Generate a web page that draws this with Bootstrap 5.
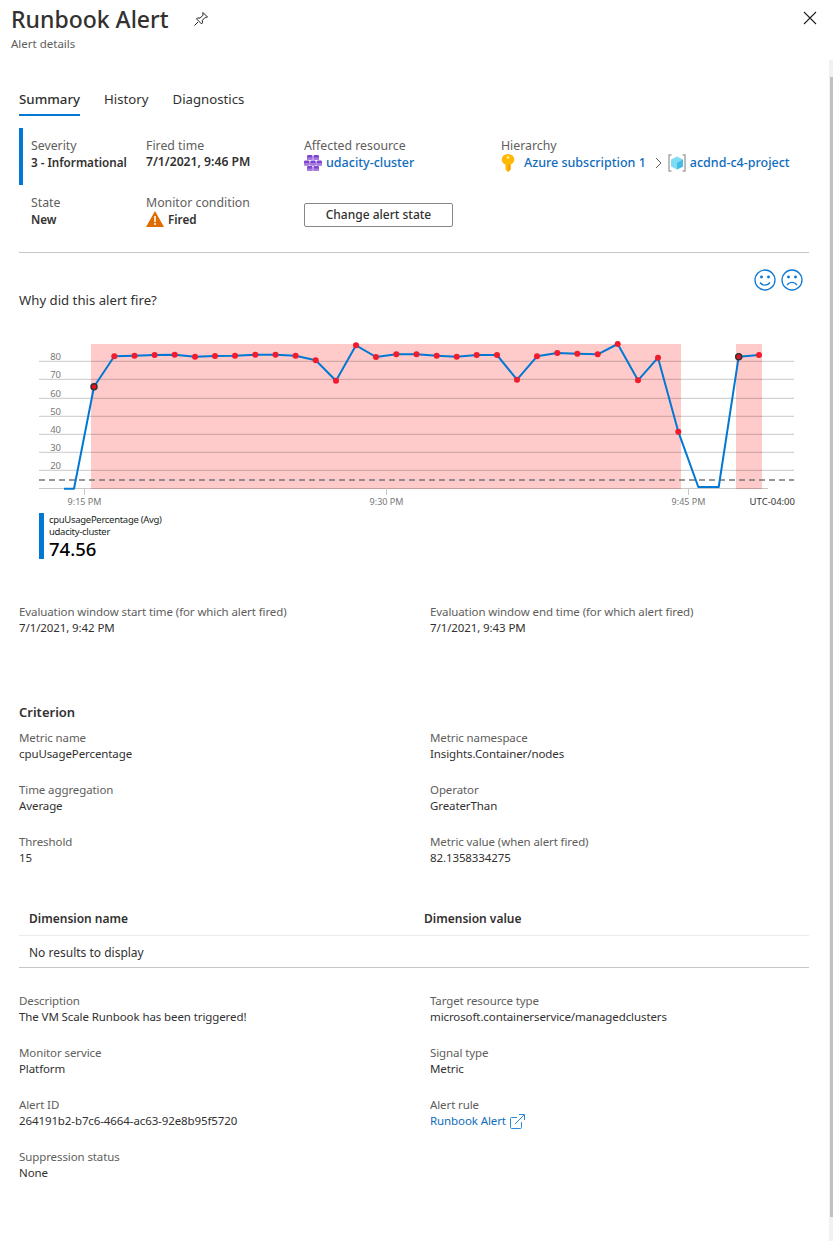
<!DOCTYPE html>
<html lang="en">
<head>
<meta charset="UTF-8">
<title>Runbook Alert</title>
<link href="https://cdn.jsdelivr.net/npm/bootstrap@5.3.0/dist/css/bootstrap.min.css" rel="stylesheet">
<style>
    body {
        background: #fff;
        color: #323130;
        font-family: "Noto Sans", "Liberation Sans", sans-serif;
        font-size: 12px;
        line-height: 16px;
        position: relative;
        height: 1241px;
        overflow: hidden;
    }
    a { color: #0f6cbd; text-decoration: none; }
    .blade-head { padding: 3px 16px 0 11px; height: 88px; }
    .blade-title { font-size: 23px; line-height: 32px; font-weight: 500; margin: 0; }
    .blade-sub { color: #605e5c; font-size: 11.5px; margin-top: 1px; }
    .blade-body { padding: 0 24px 0 19px; }
    .tab-row { gap: 24px; height: 28px; font-size: 13.2px; line-height: 22px; }
    .tab-item { padding-bottom: 4px; color: #323130; }
    .tab-on { border-bottom: 2px solid #0078d4; font-weight: 500; font-size: 13.3px; }
    .summary-box {
        margin-top: 12px;
        display: grid;
        grid-template-columns: 115px 158px 197px auto;
        grid-template-rows: 57px 52px;
        position: relative;
        padding-left: 12px;
    }
    .summary-box::before {
        content: "";
        position: absolute;
        left: 0; top: 0;
        width: 4px; height: 57px;
        background: #0078d4;
    }
    .sum-cell { padding-top: 10px; }
    .sum-label { color: #605e5c; font-size: 12.3px; }
    .sum-value { font-weight: 600; font-size: 11.7px; }
    .sum-time { font-size: 12.2px; }
    .sum-link { font-size: 12.5px; font-weight: 500; }
    .res-link { min-height: 18px; }
    .sub-link { margin-left: 9px; }
    .hier-sep { margin: 0 6px 0 9px; }
    .state-btn {
        width: 149px; height: 24px; margin-top: 18px;
        border: 1px solid #8a8886; border-radius: 2px;
        background: #fff; color: #323130;
        font-size: 12px; line-height: 20px; padding: 0;
        font-weight: 500;
    }
    .split-line { border-top: 1px solid #c8c6c4; margin-top: 15px; }
    .fire-row { height: 44px; }
    .fire-faces { gap: 5px; margin-top: 16px; margin-right: 6px; }
    .fire-q { font-size: 13.2px; margin-top: -5px; height: 38px; }
    .chart-svg { display: block; margin-left: -19px; }
    .chart-svg text { font-family: "Noto Sans", sans-serif; }
    .legend-box { margin-left: 20px; border-left: 5px solid #0078d4; padding: 1px 0 0 5px; height: 46px; color: #201f1e; font-size: 9.5px; line-height: 12px; letter-spacing: -.3px; }
    .legend-num { font-size: 18.5px; line-height: 22px; font-weight: 500; color: #000; letter-spacing: 0; }
    .info-grid { display: grid; grid-template-columns: 411px auto; row-gap: 20px; font-size: 11.5px; letter-spacing: -.1px; }
    .info-label { color: #605e5c; }
    .eval-grid { margin-top: 45px; }
    .crit-head { font-size: 13px; font-weight: 600; margin-top: 68px; margin-bottom: 10px; }
    .dim-table { margin-top: 37px; border-bottom: 1px solid #c8c6c4; font-size: 12px; }
    .dim-head { height: 33px; border-bottom: 1px solid #edebe9; font-weight: 600; display: grid; grid-template-columns: 395px auto; padding: 8px 0 0 10px; }
    .dim-empty { height: 31px; padding: 9px 0 0 10px; }
    .desc-grid { margin-top: 25px; }
    .scroll-rail { position: absolute; left: 829px; top: 60px; width: 4px; height: 1181px; background: #f1f1f1; }
    .scroll-thumb { position: absolute; left: 1px; top: 17px; width: 3px; height: 1140px; background: #c1c1c1; }
</style>
</head>
<body>

<div class="blade-head d-flex justify-content-between">
    <div>
        <div class="d-flex align-items-center">
            <h1 class="blade-title">Runbook Alert</h1>
            <svg class="ms-4" width="16" height="16" viewBox="0 0 16 16" fill="none" stroke="#201f1e" stroke-width="1"><path d="M10 1.5l4.5 4.5-1 .6-1.2-.3-3 3 .2 2.6-1 1-5-5 1-1 2.6.2 3-3-.3-1.200z"/><path d="M5 11l-3.5 3.5"/></svg>
        </div>
        <div class="blade-sub">Alert details</div>
    </div>
    <svg class="mt-2" width="14" height="14" viewBox="0 0 14 14" stroke="#201f1e" stroke-width="1.1"><path d="M1 1l12 12M13 1L1 13"/></svg>
</div>

<div class="blade-body">

    <!-- Tabs -->
    <div class="tab-row d-flex">
        <div class="tab-item tab-on">Summary</div>
        <div class="tab-item">History</div>
        <div class="tab-item">Diagnostics</div>
    </div>

    <!-- Summary -->
    <div class="summary-box">
        <div class="sum-cell">
            <div class="sum-label">Severity</div>
            <div class="sum-value">3 - Informational</div>
        </div>
        <div class="sum-cell">
            <div class="sum-label">Fired time</div>
            <div class="sum-value sum-time">7/1/2021, 9:46 PM</div>
        </div>
        <div class="sum-cell">
            <div class="sum-label">Affected resource</div>
            <a class="sum-link res-link d-flex align-items-center gap-1" href="#">
                <svg width="18" height="16" viewBox="0 0 18 16">
                    <g fill="#7d45cf"><rect x="3" y="0" width="5.5" height="5" rx="1.2"/><rect x="9.5" y="0" width="5.5" height="5" rx="1.2"/><rect x="0" y="5.5" width="5.5" height="5" rx="1.2"/><rect x="6.25" y="5.5" width="5.5" height="5" rx="1.2"/><rect x="12.5" y="5.5" width="5.5" height="5" rx="1.2"/><rect x="3" y="11" width="5.5" height="5" rx="1.2"/><rect x="9.5" y="11" width="5.5" height="5" rx="1.2"/></g>
                    <g fill="#a77be0"><rect x="3" y="2.5" width="5.5" height="2.5"/><rect x="9.5" y="2.5" width="5.5" height="2.5"/><rect x="0" y="8" width="5.5" height="2.5"/><rect x="6.25" y="8" width="5.5" height="2.5"/><rect x="12.5" y="8" width="5.5" height="2.5"/><rect x="3" y="13.5" width="5.5" height="2.5"/><rect x="9.5" y="13.5" width="5.5" height="2.5"/></g>
                </svg>
                udacity-cluster
            </a>
        </div>
        <div class="sum-cell">
            <div class="sum-label">Hierarchy</div>
            <div class="d-flex align-items-center">
                <svg width="14" height="18" viewBox="0 0 14 18"><path d="M7 0a6.3 5.500 0 0 1 6.3 5.5A6.300 5.500 0 0 1 9.5 10.5V15.5L7 18 4.500 15.5V10.5A6.300 5.500 0 0 1 .7 5.500 6.300 5.500 0 0 1 7 0z" fill="#ffb900"/><path d="M7 10.5h2.500v5L7 18z" fill="#f7a000"/><circle cx="7" cy="3.5" r="1.3" fill="#fff0b8"/></svg>
                <a class="sum-link sub-link" href="#">Azure subscription 1</a>
                <svg class="hier-sep" width="7" height="12" viewBox="0 0 7 12" fill="none" stroke="#605e5c"><path d="M1 1l5 5-5 5"/></svg>
                <svg width="18" height="18" viewBox="0 0 18 18"><path d="M3.500 1H1v16h2.500M14.500 1H17v16h-2.500" fill="none" stroke="#a8a8a8" stroke-width="1.5"/><path d="M9 2.500l6 3v7l-6 3-6-3v-7z" fill="#7fdcf5"/><path d="M9 9l6-3.500v7l-6 3z" fill="#45bce6"/></svg>
                <a class="sum-link ms-1" href="#">acdnd-c4-project</a>
            </div>
        </div>
        <div class="sum-cell">
            <div class="sum-label">State</div>
            <div class="sum-value">New</div>
        </div>
        <div class="sum-cell">
            <div class="sum-label">Monitor condition</div>
            <div class="sum-value d-flex align-items-center gap-1">
                <svg width="18" height="16" viewBox="0 0 18 16"><path d="M9 0l9 16H0z" fill="#e06c00"/><path d="M8.2 5h1.600v6H8.2zM8.2 12h1.600v2H8.2z" fill="#fff"/></svg>
                Fired
            </div>
        </div>
        <div>
            <button type="button" class="state-btn">Change alert state</button>
        </div>
        <div></div>
    </div>

    <div class="split-line"></div>

    <div class="fire-row d-flex justify-content-end">
        <div class="fire-faces d-flex">
            <svg width="22" height="22" viewBox="0 0 22 22" fill="none" stroke="#0f78d4" stroke-width="1.3"><circle cx="11" cy="11" r="10"/><path d="M6 13.500c2.500 3.500 7.500 3.500 10 0"/><circle cx="7.5" cy="8" r=".8" fill="#0f78d4"/><circle cx="14.5" cy="8" r=".8" fill="#0f78d4"/></svg>
            <svg width="22" height="22" viewBox="0 0 22 22" fill="none" stroke="#0f78d4" stroke-width="1.3"><circle cx="11" cy="11" r="10"/><path d="M6 16c2.500-3.500 7.500-3.500 10 0"/><circle cx="7.5" cy="8" r=".8" fill="#0f78d4"/><circle cx="14.5" cy="8" r=".8" fill="#0f78d4"/></svg>
        </div>
    </div>
    <div class="fire-q">Why did this alert fire?</div>

    <!-- Chart -->
    <svg class="chart-svg" id="alertChart" width="800" height="183" viewBox="0 330 800 183"></svg>

    <div class="legend-box">
        <div>cpuUsagePercentage (Avg)</div>
        <div>udacity-cluster</div>
        <div class="legend-num">74.56</div>
    </div>

    <!-- Evaluation window -->
    <div class="info-grid eval-grid">
        <div><div class="info-label">Evaluation window start time (for which alert fired)</div><div>7/1/2021, 9:42 PM</div></div>
        <div><div class="info-label">Evaluation window end time (for which alert fired)</div><div>7/1/2021, 9:43 PM</div></div>
    </div>

    <!-- Criterion -->
    <div class="crit-head">Criterion</div>
    <div class="info-grid">
        <div><div class="info-label">Metric name</div><div>cpuUsagePercentage</div></div>
        <div><div class="info-label">Metric namespace</div><div>Insights.Container/nodes</div></div>
        <div><div class="info-label">Time aggregation</div><div>Average</div></div>
        <div><div class="info-label">Operator</div><div>GreaterThan</div></div>
        <div><div class="info-label">Threshold</div><div>15</div></div>
        <div><div class="info-label">Metric value (when alert fired)</div><div>82.1358334275</div></div>
    </div>

    <div class="dim-table">
        <div class="dim-head"><div>Dimension name</div><div>Dimension value</div></div>
        <div class="dim-empty">No results to display</div>
    </div>

    <div class="info-grid desc-grid">
        <div><div class="info-label">Description</div><div>The VM Scale Runbook has been triggered!</div></div>
        <div><div class="info-label">Target resource type</div><div>microsoft.containerservice/managedclusters</div></div>
        <div><div class="info-label">Monitor service</div><div>Platform</div></div>
        <div><div class="info-label">Signal type</div><div>Metric</div></div>
        <div><div class="info-label">Alert ID</div><div>264191b2-b7c6-4664-ac63-92e8b95f5720</div></div>
        <div><div class="info-label">Alert rule</div><div class="d-flex align-items-center gap-1"><a href="#">Runbook Alert</a>
            <svg width="15" height="15" viewBox="0 0 15 15" fill="none" stroke="#2b88d8"><path d="M7 3.500H1.500a1 1 0 0 0-1 1v9a1 1 0 0 0 1 1h9a1 1 0 0 0 1-1V8"/><path d="M5 10L14 1M9 .5h5.500V6"/></svg></div></div>
        <div><div class="info-label">Suppression status</div><div>None</div></div>
    </div>
</div>

<div class="scroll-rail"><div class="scroll-thumb"></div></div>

<script src="https://cdn.jsdelivr.net/npm/bootstrap@5.3.0/dist/js/bootstrap.bundle.min.js"></script>
<script>
    // chart data, in page pixels
    const pts = [[64,488.7],[74,488.7],[94,386.7],[114.3,356.3],[134.5,355.7],[154.6,355],[174.7,354.7],[195,356.7],[215,356],[235,355.7],[255.3,354.7],[275.5,354.7],[295.6,355.7],[315.7,360.3],[336,380.7],[356,345.3],[376,357],[396.3,354.3],[416.5,354.3],[436.7,355.7],[456.7,356.7],[476.7,355],[497,355],[517,379.7],[537,356.3],[557.3,353],[577.3,353.7],[597.7,354.3],[617.7,344],[638,380.3],[658,357.7],[678.3,431.7],[698.3,487],[718.7,487],[738.7,356.7],[759,355]];
    const noDot = [0, 1, 32, 33];
    const dark = [2, 34];
    const grid = [[361.3,80],[379.3,70],[398.3,60],[416.3,50],[434.3,40],[452.3,30],[470.3,20]];
    let s = '';
    s += '<rect x="91" y="344" width="590" height="145" fill="#ffcaca"/>';
    s += '<rect x="736" y="344" width="26" height="145" fill="#ffcaca"/>';
    grid.forEach(g => {
        s += `<path d="M39 ${g[0]}H794" stroke="#000" stroke-opacity=".22"/>`;
        s += `<text x="61" y="${g[0] - 1.5}" text-anchor="end" font-size="9.5" fill="#777">${g[1]}</text>`;
    });
    s += '<path d="M39 488.5H768" stroke="#000" stroke-opacity=".22"/>';
    s += '<path d="M39 480H794" stroke="#777" stroke-width="1.5" stroke-dasharray="6 4"/>';
    [[84.5,'9:15 PM'],[386.5,'9:30 PM'],[688.5,'9:45 PM']].forEach(t => {
        s += `<path d="M${t[0]} 488V495" stroke="#c8c8c8"/>`;
        s += `<text x="${t[0]}" y="504.5" text-anchor="middle" font-size="9" fill="#777">${t[1]}</text>`;
    });
    s += '<text x="795" y="504.5" text-anchor="end" font-size="9.5" fill="#333">UTC-04:00</text>';
    s += `<polyline points="${pts.map(p => p.join(',')).join(' ')}" fill="none" stroke="#0078d4" stroke-width="2" stroke-linejoin="round"/>`;
    pts.forEach((p, i) => {
        if (noDot.includes(i)) return;
        if (dark.includes(i)) {
            s += `<circle cx="${p[0]}" cy="${p[1]}" r="3" fill="#e81123" stroke="#333" stroke-width="1.5"/>`;
        } else {
            s += `<circle cx="${p[0]}" cy="${p[1]}" r="3" fill="#f01c2c"/>`;
        }
    });
    document.getElementById('alertChart').innerHTML = s;
</script>
</body>
</html>
